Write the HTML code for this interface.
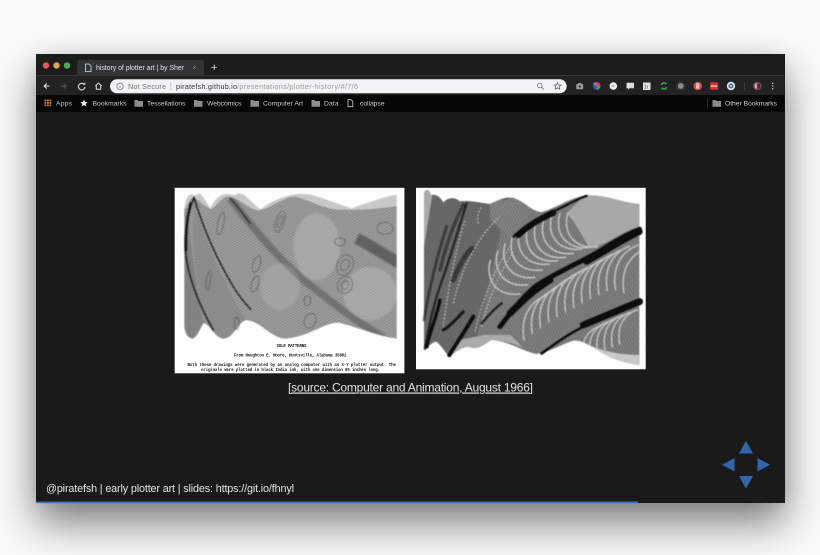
<!DOCTYPE html>
<html lang="en"><head><meta charset="utf-8"><title>history of plotter art</title>
<style>
html,body{margin:0;padding:0;width:820px;height:555px;overflow:hidden;background:#fafafa}
#win{position:absolute;left:36px;top:54px;width:748.5px;height:449px;background:#1a1a1a;box-shadow:0 20px 38px rgba(0,0,0,.5),0 0 14px rgba(0,0,0,.08)}
svg{position:absolute;left:0;top:0}
text{font-family:"Liberation Sans",sans-serif}
.m{font-family:"Liberation Mono",monospace;font-weight:bold}
</style></head><body>
<div id="win"></div>
<svg width="820" height="555" viewBox="0 0 820 555" xmlns="http://www.w3.org/2000/svg">
<defs>
<filter id="b1" x="-5%" y="-5%" width="110%" height="110%"><feGaussianBlur stdDeviation="1.5"/></filter>
<filter id="b3" x="-5%" y="-5%" width="110%" height="110%"><feGaussianBlur stdDeviation="2.5"/></filter>
<filter id="t" x="-5%" y="-20%" width="110%" height="140%"><feGaussianBlur stdDeviation="0.25"/></filter>
<pattern id="h1" width="7" height="7" patternUnits="userSpaceOnUse" patternTransform="rotate(28)"><rect width="7" height="3" fill="#555"/></pattern>
<pattern id="h2" width="7.6" height="7.6" patternUnits="userSpaceOnUse" patternTransform="rotate(-34)"><rect width="7.6" height="3.200" fill="#666"/></pattern>
<pattern id="h3" width="8" height="8" patternUnits="userSpaceOnUse" patternTransform="rotate(62)"><rect width="8" height="3.500" fill="#333"/></pattern>
<clipPath id="c1"><path d="M43 90C52 80 62 50 72 52C85 60 100 76 122 88C140 78 160 48 175 50C200 52 235 84 262 92C300 88 345 48 375 50C405 55 445 80 495 88C560 92 620 88 680 78V476C620 468 560 440 505 428C460 428 420 470 345 476C300 472 275 425 228 420C205 425 190 476 160 476C130 470 115 425 100 430C90 445 80 476 65 476C50 472 45 455 43 440Z"/></clipPath>
<clipPath id="c2"><path d="M42 40C45 28 58 24 62 45C70 45 85 40 100 68C110 55 130 48 150 64C175 60 215 70 240 72C265 62 285 48 310 54C345 65 365 95 395 96C440 85 490 45 540 46C590 46 640 68 688 72V555C650 550 610 540 570 515C540 495 510 478 490 482C450 495 420 515 380 522C340 515 295 482 245 480C225 490 205 510 185 503C170 495 150 505 118 530C105 515 95 500 85 490C75 475 55 500 42 512Z"/></clipPath>
<path id="arcA" d="M330 150C312 205 345 262 420 252" fill="none" stroke="#c6c6c6" stroke-width="4"/>
<path id="arcB" d="M560 250C510 268 480 315 492 385" fill="none" stroke="#c6c6c6" stroke-width="4"/>
<path id="arcC" d="M640 405C600 418 575 450 585 510" fill="none" stroke="#c6c6c6" stroke-width="4"/>
</defs>

<!-- chrome -->
<rect x="36" y="54" width="748.5" height="22" fill="#1c1c1d"/>
<rect x="36" y="75" width="748.5" height="1" fill="#333"/>
<rect x="36" y="76" width="748.5" height="19" fill="#222223"/>
<rect x="36" y="95" width="748.5" height="17" fill="#070707"/>
<circle cx="46" cy="65.5" r="3.2" fill="#e8575a"/>
<circle cx="56.500" cy="65.500" r="3.200" fill="#e0a93a"/>
<circle cx="67" cy="65.500" r="3.200" fill="#3fb24e"/>
<path d="M77.500 76V62.500Q77.500 60 80 60H201.500Q204 60 204 62.500V76Z" fill="#333436"/>
<path d="M85.500 64h3.500l2 2v5.500h-5.500z" fill="none" stroke="#ddd" stroke-width=".8"/>
<g filter="url(#t)">
<text x="96" y="70" font-size="7" fill="#e2e2e2" textLength="88">history of plotter art | by Sher</text>
<text x="192.500" y="70" font-size="7" fill="#888">×</text>
<text x="211" y="71" font-size="11" fill="#ddd">+</text>
</g>
<!-- nav icons -->
<path d="M49.500 86H44.500M46.800 83.500L44.200 86L46.800 88.500" fill="none" stroke="#ddd" stroke-width="1.100"/>
<path d="M60.500 86H66M63.700 83.500L66.300 86L63.700 88.500" fill="none" stroke="#555" stroke-width="1.100"/>
<path d="M84.300 84.500A3.300 3.300 0 1 0 85 87" fill="none" stroke="#ddd" stroke-width="1.100"/>
<path d="M82.800 84.800H85.300V82.300Z" fill="#ddd"/>
<path d="M95.300 86L98.500 83L101.700 86M96.300 85.500V89.300H100.700V85.500" fill="none" stroke="#ddd" stroke-width="1"/>
<!-- omnibox -->
<rect x="110" y="79.300" width="456.700" height="14" rx="7" fill="#f1f3f4"/>
<circle cx="120" cy="86.300" r="3.200" fill="none" stroke="#777" stroke-width=".8"/>
<rect x="119.600" y="85.600" width=".8" height="2.400" fill="#777"/>
<g filter="url(#t)">
<text x="128" y="89" font-size="7.200" fill="#777" textLength="38">Not Secure</text>
<rect x="170.500" y="82.500" width=".7" height="7.500" fill="#bbb"/>
<text x="176" y="89" font-size="7.200" fill="#333" textLength="61">piratefsh.github.io</text>
<text x="237" y="89" font-size="7.200" fill="#999" textLength="121">/presentations/plotter-history/#/7/6</text>
</g>
<circle cx="539.800" cy="85.500" r="2.300" fill="none" stroke="#777" stroke-width=".8"/>
<path d="M541.500 87.200L543.800 89.500" stroke="#777" stroke-width=".9"/>
<path d="M557.500 82.500l1 2.400 2.500.2-1.900 1.600.6 2.500-2.200-1.300-2.200 1.300.6-2.500-1.900-1.600 2.500-.2z" fill="none" stroke="#666" stroke-width=".8"/>
<!-- extensions -->
<rect x="576.200" y="84" width="7" height="5.200" rx=".8" fill="#9a9a9a"/><rect x="578" y="83" width="3.400" height="1.500" fill="#9a9a9a"/><circle cx="579.700" cy="86.500" r="1.200" fill="#444"/>
<circle cx="596.700" cy="86" r="3.800" fill="#3a5bb5"/><path d="M596.700 86V82.200A3.800 3.800 0 0 1 600.500 86Z" fill="#d8463c"/><path d="M596.700 86H600.500A3.800 3.800 0 0 1 596.700 89.800Z" fill="#3faa55"/><path d="M596.700 86V82.200A3.800 3.800 0 0 0 593 84Z" fill="#c95cc0"/>
<circle cx="613.300" cy="86" r="3.800" fill="#eee"/><circle cx="613.300" cy="86" r="1.200" fill="#aaa"/>
<path d="M626.500 82.800h7.500v5.400h-4.300l-1.500 1.500v-1.500h-1.700z" fill="#ddd"/>
<rect x="643" y="82.500" width="7.500" height="7.500" fill="#e4e4e4"/><text x="644" y="88.500" font-size="5" fill="#444">1r</text>
<path d="M661.500 85a2.800 2.800 0 0 1 5-1M666.700 87a2.800 2.800 0 0 1-5 1" fill="none" stroke="#36a93f" stroke-width="1.500"/>
<path d="M665 82.500l2 1.500-2.200.8zM663 89.500l-2-1.500 2.200-.8z" fill="#36a93f"/>
<circle cx="680.700" cy="86" r="3" fill="#8a8a8a"/><circle cx="680.700" cy="86" r="4.200" fill="none" stroke="#555" stroke-width=".7" stroke-dasharray="1 1"/>
<circle cx="697.700" cy="86" r="4.300" fill="#d9484e"/><rect x="696" y="83" width="3.400" height="6" rx="1.500" fill="#f3b9bb"/>
<rect x="710" y="82.300" width="8.200" height="7.500" rx="1" fill="#d32f36"/><rect x="711" y="85.500" width="6.200" height="1.300" fill="#f2d5d5"/>
<circle cx="731" cy="86" r="4.200" fill="#dfe6f0"/><circle cx="731" cy="86" r="2.500" fill="#3f6ca8"/><circle cx="731" cy="86" r="1" fill="#dfe6f0"/>
<rect x="744" y="82" width=".7" height="8" fill="#444"/>
<circle cx="757.300" cy="86" r="4.300" fill="#6d4a58"/><ellipse cx="755.800" cy="86" rx="1.100" ry="2.800" fill="#d9a9b5"/><ellipse cx="759" cy="86" rx=".8" ry="2.500" fill="#2c1d24"/>
<circle cx="772.700" cy="83.300" r=".75" fill="#ccc"/><circle cx="772.700" cy="86" r=".75" fill="#ccc"/><circle cx="772.700" cy="88.700" r=".75" fill="#ccc"/>
<!-- bookmarks -->
<g fill="#d07a2c"><rect x="44.500" y="99.500" width="1.800" height="1.800"/><rect x="47" y="99.500" width="1.800" height="1.800"/><rect x="49.500" y="99.500" width="1.800" height="1.800"/><rect x="44.500" y="102" width="1.800" height="1.800"/><rect x="47" y="102" width="1.800" height="1.800"/><rect x="49.500" y="102" width="1.800" height="1.800"/><rect x="44.500" y="104.500" width="1.800" height="1.800"/><rect x="47" y="104.500" width="1.800" height="1.800"/><rect x="49.500" y="104.500" width="1.800" height="1.800"/></g>
<path d="M84 99.500l1.100 2.400 2.600.3-1.900 1.700.5 2.500-2.300-1.300-2.300 1.300.5-2.500-1.900-1.700 2.600-.3z" fill="#e8e8e8"/>
<g fill="#8d8d8d">
<path d="M134.500 100h3l.8 1h4.700v5.700h-8.500z"/><path d="M194 100h3l.8 1h4.700v5.700H194z"/><path d="M250.500 100h3l.8 1h4.700v5.700h-8.500z"/><path d="M311.500 100h3l.8 1h4.700v5.700h-8.500z"/><path d="M712.500 100h3l.8 1h4.700v5.700h-8.500z"/>
</g>
<path d="M348 99.500h3l1.800 1.800v5.400H348z" fill="none" stroke="#ccc" stroke-width=".8"/>
<g font-size="6.800" fill="#c9c9c9" filter="url(#t)">
<text x="56" y="105.700" textLength="16">Apps</text>
<text x="92.500" y="105.700" textLength="34">Bookmarks</text>
<text x="147" y="105.700" textLength="38.500">Tessellations</text>
<text x="207" y="105.700" textLength="34.500">Webcomics</text>
<text x="263" y="105.700" textLength="40">Computer Art</text>
<text x="324" y="105.700" textLength="14.500">Data</text>
<text x="360" y="105.700" textLength="24.500">collapse</text>
<text x="725" y="105.700" textLength="52">Other Bookmarks</text>
</g>
<rect x="707" y="98" width=".7" height="10" fill="#333"/>

<!-- image 1 -->
<rect x="174.700" y="187.800" width="229.700" height="185.500" fill="#fdfdfd"/>
<g transform="translate(170 180) scale(.33333)" filter="url(#b1)">
<path d="M43 90C45 55 58 38 68 44C76 50 78 42 86 40C100 42 108 70 122 84C132 60 150 42 172 42C184 42 192 50 205 40C225 38 245 70 272 88C295 70 330 48 385 42C430 38 480 65 545 85C590 70 640 50 680 44V100H43Z" fill="#c8c8c8"/>
<path d="M43 90C52 80 62 50 72 52C85 60 100 76 122 88C140 78 160 48 175 50C200 52 235 84 262 92C300 88 345 48 375 50C405 55 445 80 495 88C560 92 620 88 680 78V476C620 468 560 440 505 428C460 428 420 470 345 476C300 472 275 425 228 420C205 425 190 476 160 476C130 470 115 425 100 430C90 445 80 476 65 476C50 472 45 455 43 440Z" fill="#b4b4b4"/>
<g clip-path="url(#c1)">
<rect x="40" y="40" width="645" height="440" fill="url(#h1)" opacity=".5"/>
<rect x="40" y="40" width="645" height="440" fill="url(#h2)" opacity=".45"/>
<path d="M43 90C60 120 65 250 100 430C90 445 80 476 65 476C50 472 45 455 43 440Z" fill="#666" opacity=".4"/>
<path d="M72 55C85 110 120 240 228 420C205 425 190 476 160 476C130 470 115 425 100 430C80 300 60 150 72 55Z" fill="#777" opacity=".3"/>
<g filter="url(#b3)">
<path d="M180 55C240 130 300 210 400 300C480 360 560 430 640 470" fill="none" stroke="#444" stroke-width="22" opacity=".45"/>
<path d="M560 175C610 200 650 230 690 250" fill="none" stroke="#333" stroke-width="34" opacity=".55"/>
<ellipse cx="440" cy="200" rx="70" ry="100" fill="#ccc" opacity=".35"/>
<ellipse cx="600" cy="340" rx="80" ry="80" fill="#d0d0d0" opacity=".3"/>
<ellipse cx="330" cy="320" rx="60" ry="70" fill="#c8c8c8" opacity=".25"/>
</g>
</g>
<g fill="none" stroke="#5a5a5a" stroke-width="3.500" opacity=".6">
<ellipse cx="330" cy="125" rx="13" ry="33" transform="rotate(18 330 125)"/>
<ellipse cx="330" cy="125" rx="6" ry="19" transform="rotate(18 330 125)"/>
<ellipse cx="260" cy="252" rx="11" ry="25" transform="rotate(18 260 252)"/>
<ellipse cx="255" cy="312" rx="11" ry="25" transform="rotate(18 255 312)"/>
<ellipse cx="525" cy="255" rx="24" ry="32" transform="rotate(25 525 255)"/>
<ellipse cx="525" cy="255" rx="12" ry="18" transform="rotate(25 525 255)"/>
<ellipse cx="525" cy="315" rx="22" ry="26" transform="rotate(25 525 315)"/>
<ellipse cx="525" cy="315" rx="10" ry="14" transform="rotate(25 525 315)"/>
<ellipse cx="420" cy="422" rx="17" ry="23" transform="rotate(20 420 422)"/>
<ellipse cx="412" cy="362" rx="10" ry="15"/>
<ellipse cx="152" cy="130" rx="9" ry="34" transform="rotate(12 152 130)"/>
<ellipse cx="510" cy="185" rx="16" ry="12"/>
<ellipse cx="645" cy="145" rx="24" ry="18"/>
<ellipse cx="200" cy="430" rx="7" ry="18"/>
<ellipse cx="115" cy="300" rx="6" ry="30" transform="rotate(10 115 300)"/>
</g>
<g fill="none" stroke-linecap="round">
<path d="M72 52C52 100 42 170 47 220C55 290 85 370 130 450" stroke="#222" stroke-width="5.500"/>
<path d="M62 70C52 110 46 160 48 210" stroke="#111" stroke-width="8"/>
<path d="M72 52C95 130 130 220 190 320C205 345 225 370 242 388" stroke="#1d1d1d" stroke-width="5"/>
<path d="M180 55C205 80 225 110 240 130" stroke="#222" stroke-width="4"/>
</g>
</g>
<g fill="#222" filter="url(#t)">
<text class="m" x="276.500" y="347" font-size="4.100" textLength="30">SOLE PATTERNS</text>
<text class="m" x="234" y="356.500" font-size="4.100" textLength="112.500">From Houghton E. Moore, Huntsville, Alabama 35802</text>
<text class="m" x="187.500" y="365.800" font-size="4.100" textLength="208.500">Both these drawings were generated by an analog computer with an X-Y plotter output.  The</text>
<text class="m" x="201" y="371" font-size="4.100" textLength="179">originals were plotted in black India ink, with one dimension 85 inches long.</text>
</g>

<!-- image 2 -->
<rect x="416" y="187.800" width="229.700" height="181.500" fill="#fdfdfd"/>
<g transform="translate(410 180) scale(.33333)" filter="url(#b1)">
<path d="M42 40C45 28 58 24 62 45C70 45 85 40 100 68C110 55 130 48 150 64C175 60 215 70 240 72C265 62 285 48 310 54C345 65 365 95 395 96C440 85 490 45 540 46C590 46 640 68 688 72V555C650 550 610 540 570 515C540 495 510 478 490 482C450 495 420 515 380 522C340 515 295 482 245 480C225 490 205 510 185 503C170 495 150 505 118 530C105 515 95 500 85 490C75 475 55 500 42 512Z" fill="#858585"/>
<g clip-path="url(#c2)">
<path d="M42 30H300L190 520H42Z" fill="#707070"/>
<path d="M240 60H395L300 170L240 120Z" fill="#8a8a8a"/>
<rect x="40" y="20" width="650" height="540" fill="url(#h3)" opacity=".35"/>
<path d="M42 25H70L50 150L42 200Z" fill="#aaa"/>
<path d="M530 40H690V140C640 150 600 190 540 205C510 160 490 115 470 100Z" fill="#a8a8a8"/>
<path d="M500 480C540 495 590 525 690 525V560H640C610 540 540 500 500 480Z" fill="#c8c8c8"/>
<path d="M120 530C150 505 170 495 185 503C205 510 225 490 245 480C280 480 310 490 340 503L300 465L220 465L150 480Z" fill="#aaa"/>
<!-- arcs, upper band -->
<use href="#arcA"/><use href="#arcA" transform="translate(24 -10)"/><use href="#arcA" transform="translate(48 -20)"/><use href="#arcA" transform="translate(72 -32)"/><use href="#arcA" transform="translate(96 -45)"/><use href="#arcA" transform="translate(120 -50)"/><use href="#arcA" transform="translate(144 -52)"/><use href="#arcA" transform="translate(-22 18)"/><use href="#arcA" transform="translate(-44 40)"/><use href="#arcA" transform="translate(-66 62)"/><use href="#arcA" transform="translate(-88 90)"/>
<!-- arcs, middle band -->
<use href="#arcB"/><use href="#arcB" transform="translate(25 -14)"/><use href="#arcB" transform="translate(50 -28)"/><use href="#arcB" transform="translate(75 -40)"/><use href="#arcB" transform="translate(100 -52)"/><use href="#arcB" transform="translate(125 -55)"/><use href="#arcB" transform="translate(150 -45)"/><use href="#arcB" transform="translate(-25 12)"/><use href="#arcB" transform="translate(-50 26)"/><use href="#arcB" transform="translate(-75 42)"/><use href="#arcB" transform="translate(-100 60)"/><use href="#arcB" transform="translate(-125 78)"/><use href="#arcB" transform="translate(-150 96)"/>
<!-- arcs, lower band -->
<use href="#arcC"/><use href="#arcC" transform="translate(22 -8)"/><use href="#arcC" transform="translate(44 -16)"/><use href="#arcC" transform="translate(-22 10)"/><use href="#arcC" transform="translate(-44 20)"/><use href="#arcC" transform="translate(-66 32)"/>
</g>
<!-- wiggle moire lines -->
<g fill="none" stroke="#cfcfcf" stroke-width="3" opacity=".8" stroke-dasharray="6 5">
<path d="M195 455C210 390 240 290 300 200"/>
<path d="M215 440C230 380 255 300 310 215"/>
<path d="M130 370C150 280 200 170 270 110"/>
<path d="M100 440C110 360 130 230 165 120"/>
<path d="M205 130C200 110 205 95 215 80"/>
</g>
<!-- dark bands -->
<g fill="none" stroke-linecap="round" stroke="#0c0c0c">
<path d="M270 440C300 400 330 360 375 320C440 275 530 240 590 200C630 175 660 160 688 148" stroke-width="16"/>
<path d="M300 400C330 370 370 330 420 300" stroke-width="22"/>
<path d="M530 245C580 215 630 185 688 155" stroke-width="20"/>
<path d="M395 520C430 495 470 465 520 440C580 415 640 385 688 362" stroke-width="9"/>
<path d="M520 435C580 410 640 385 688 365" stroke-width="22"/>
<path d="M310 170C350 130 420 100 480 70C500 60 515 52 530 48" stroke-width="8"/>
<path d="M325 165C355 135 395 115 430 98" stroke-width="20"/>
<path d="M45 505C55 450 70 370 100 290C115 250 135 180 170 70" stroke-width="8" opacity=".7"/>
<path d="M118 525C140 490 170 445 190 410" stroke-width="13"/>
<path d="M50 500C60 455 80 410 90 360" stroke-width="11"/>
<path d="M100 450C120 440 145 410 160 395" stroke-width="10" opacity=".9"/>
<path d="M42 420C55 340 80 230 110 140" stroke-width="9" opacity=".5"/>
<path d="M130 300C150 250 170 220 185 205" stroke-width="16" opacity=".5"/>
<path d="M90 270C110 190 135 120 160 75" stroke-width="11" opacity=".45"/>
<path d="M215 430C240 400 255 385 275 370" stroke-width="8" opacity=".8"/>
</g>
</g>

<!-- caption -->
<text x="288" y="391.500" font-size="12" fill="#e0e0e0" textLength="245" text-decoration="underline" filter="url(#t)">[source: Computer and Animation, August 1966]</text>
<text x="46" y="492" font-size="10.800" fill="#e2e2e2" textLength="248" filter="url(#t)">@piratefsh | early plotter art | slides: https://git.io/fhnyl</text>
<!-- nav arrows -->
<g fill="#2f66ad">
<path d="M746 441L753 453.500H739Z"/>
<path d="M746 488.500L739 476H753Z"/>
<path d="M722 464.700L734.500 458V471.500Z"/>
<path d="M770 464.700L757.500 458V471.500Z"/>
</g>
<!-- progress -->
<rect x="36" y="501.500" width="602" height="1.700" fill="#3f72b3"/>
</svg>
</body></html>
